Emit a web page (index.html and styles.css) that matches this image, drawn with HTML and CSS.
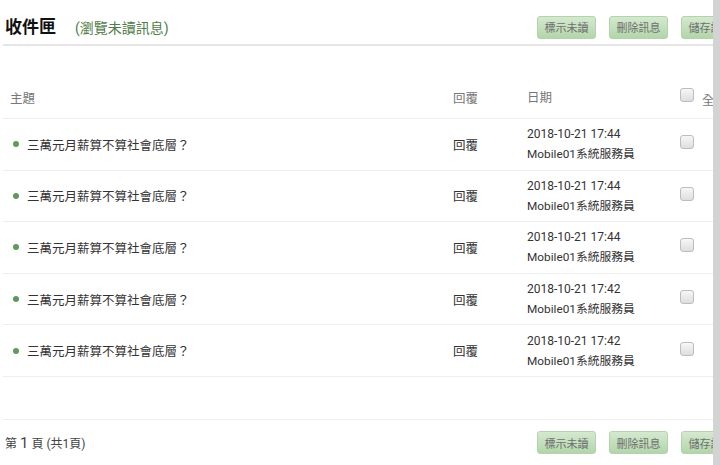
FILE: index.html
```html
<!DOCTYPE html>
<html lang="zh-Hant">
  <head>
    <meta charset="UTF-8" />
    <meta name="viewport" content="width=device-width, initial-scale=1.0" />
    <title>收件匣</title>
    <link rel="stylesheet" href="styles.css">
  </head>
  <body>
    <div class="page">
      <!-- title bar -->
      <div class="head">
        <div class="head-title">
          <h1>收件匣</h1>
          <span class="unread-link">(瀏覽未讀訊息)</span>
        </div>
        <div class="actions">
          <button class="btn">標示未讀</button>
          <button class="btn">刪除訊息</button>
          <button class="btn">儲存訊息</button>
        </div>
      </div>

      <!-- message list -->
      <div class="list">
        <div class="row row-head">
          <div class="col-subject">主題</div>
          <div class="col-reply">回覆</div>
          <div class="col-date">日期</div>
          <div class="col-check"><span class="check"></span><span class="check-label">全選</span></div>
        </div>
        <div class="row">
          <div class="col-subject"><span class="dot"></span>三萬元月薪算不算社會底層？</div>
          <div class="col-reply">回覆</div>
          <div class="col-date">2018-10-21 17:44<br><span class="sender">Mobile01系統服務員</span></div>
          <div class="col-check"><span class="check"></span></div>
        </div>
        <div class="row">
          <div class="col-subject"><span class="dot"></span>三萬元月薪算不算社會底層？</div>
          <div class="col-reply">回覆</div>
          <div class="col-date">2018-10-21 17:44<br><span class="sender">Mobile01系統服務員</span></div>
          <div class="col-check"><span class="check"></span></div>
        </div>
        <div class="row">
          <div class="col-subject"><span class="dot"></span>三萬元月薪算不算社會底層？</div>
          <div class="col-reply">回覆</div>
          <div class="col-date">2018-10-21 17:44<br><span class="sender">Mobile01系統服務員</span></div>
          <div class="col-check"><span class="check"></span></div>
        </div>
        <div class="row">
          <div class="col-subject"><span class="dot"></span>三萬元月薪算不算社會底層？</div>
          <div class="col-reply">回覆</div>
          <div class="col-date">2018-10-21 17:42<br><span class="sender">Mobile01系統服務員</span></div>
          <div class="col-check"><span class="check"></span></div>
        </div>
        <div class="row">
          <div class="col-subject"><span class="dot"></span>三萬元月薪算不算社會底層？</div>
          <div class="col-reply">回覆</div>
          <div class="col-date">2018-10-21 17:42<br><span class="sender">Mobile01系統服務員</span></div>
          <div class="col-check"><span class="check"></span></div>
        </div>
        <div class="row-empty"></div>
      </div>

      <!-- footer -->
      <div class="foot">
        <div class="pager">第 <span class="pager-num">1</span> 頁 (共1頁)</div>
        <div class="actions">
          <button class="btn">標示未讀</button>
          <button class="btn">刪除訊息</button>
          <button class="btn">儲存訊息</button>
        </div>
      </div>
    </div>

    <div class="scrollbar"></div>
  </body>
</html>
```

FILE: styles.css
```css
* {
  box-sizing: border-box;
}

html {
  overflow: hidden;
}

body {
  margin: 0;
  background: #fff;
  color: #333;
  font-family: Roboto, "Noto Sans CJK TC", sans-serif;
}

.page {
  width: 740px;
  padding: 0 0 0 3px;
}

.head {
  display: flex;
  justify-content: space-between;
  align-items: center;
  height: 46px;
  padding-top: 6px;
  border-bottom: 2px solid #e6e6e6;
}

.head-title {
  display: flex;
  align-items: baseline;
  padding-left: 2px;
}

.head h1 {
  margin: 0;
  font-size: 17px;
  font-weight: bold;
  color: #111;
}

.unread-link {
  margin-left: 19px;
  font-size: 14px;
  color: #4f7d4a;
}

.head .actions {
  margin-top: 4px;
}

.actions {
  display: flex;
  gap: 13px;
}

.btn {
  height: 23px;
  padding: 0 6.5px;
  font-family: inherit;
  font-size: 11px;
  color: #6f6f6f;
  background: linear-gradient(#d4e9cf, #b3d5ab);
  border: 1px solid #b4d3ac;
  border-radius: 3px;
}

.list {
  margin-top: 31px;
}

.row {
  display: flex;
  align-items: center;
  height: 51.6px;
  border-bottom: 1px solid #eeeeee;
  font-size: 12.5px;
}

.row-head {
  height: 42px;
  color: #777;
}

.col-subject {
  display: flex;
  align-items: center;
  width: 450px;
  padding-left: 7px;
}

.col-reply {
  width: 74px;
}

.col-date {
  width: 153px;
  font-size: 12px;
  line-height: 20px;
  color: #333;
}

.row-head .col-date {
  font-size: 12.5px;
  color: #777;
}

.col-check {
  display: flex;
  align-items: center;
}

.check {
  display: inline-block;
  width: 14px;
  height: 14px;
  margin-top: -4px;
  border: 1px solid #bdbdbd;
  border-radius: 3px;
  background: linear-gradient(#f7f7f7, #dedede);
}

.row-head .check {
  margin-top: -6px;
}

.check-label {
  margin-left: 8px;
  margin-top: 4px;
}

.dot {
  display: inline-block;
  width: 6px;
  height: 6px;
  margin: 0 8px 0 3px;
  border-radius: 50%;
  background: #5f9a5b;
}

.sender {
  font-size: 11.8px;
}

.row-empty {
  height: 43px;
  border-bottom: 1px solid #eeeeee;
}

.foot {
  display: flex;
  justify-content: space-between;
  align-items: center;
  height: 46px;
}

.pager {
  padding-left: 2px;
  font-size: 12px;
  color: #444;
}

.pager-num {
  font-size: 15px;
}

.scrollbar {
  position: fixed;
  top: 0;
  right: 0;
  width: 7px;
  height: 100%;
  background: #d3d3d3;
}
```
